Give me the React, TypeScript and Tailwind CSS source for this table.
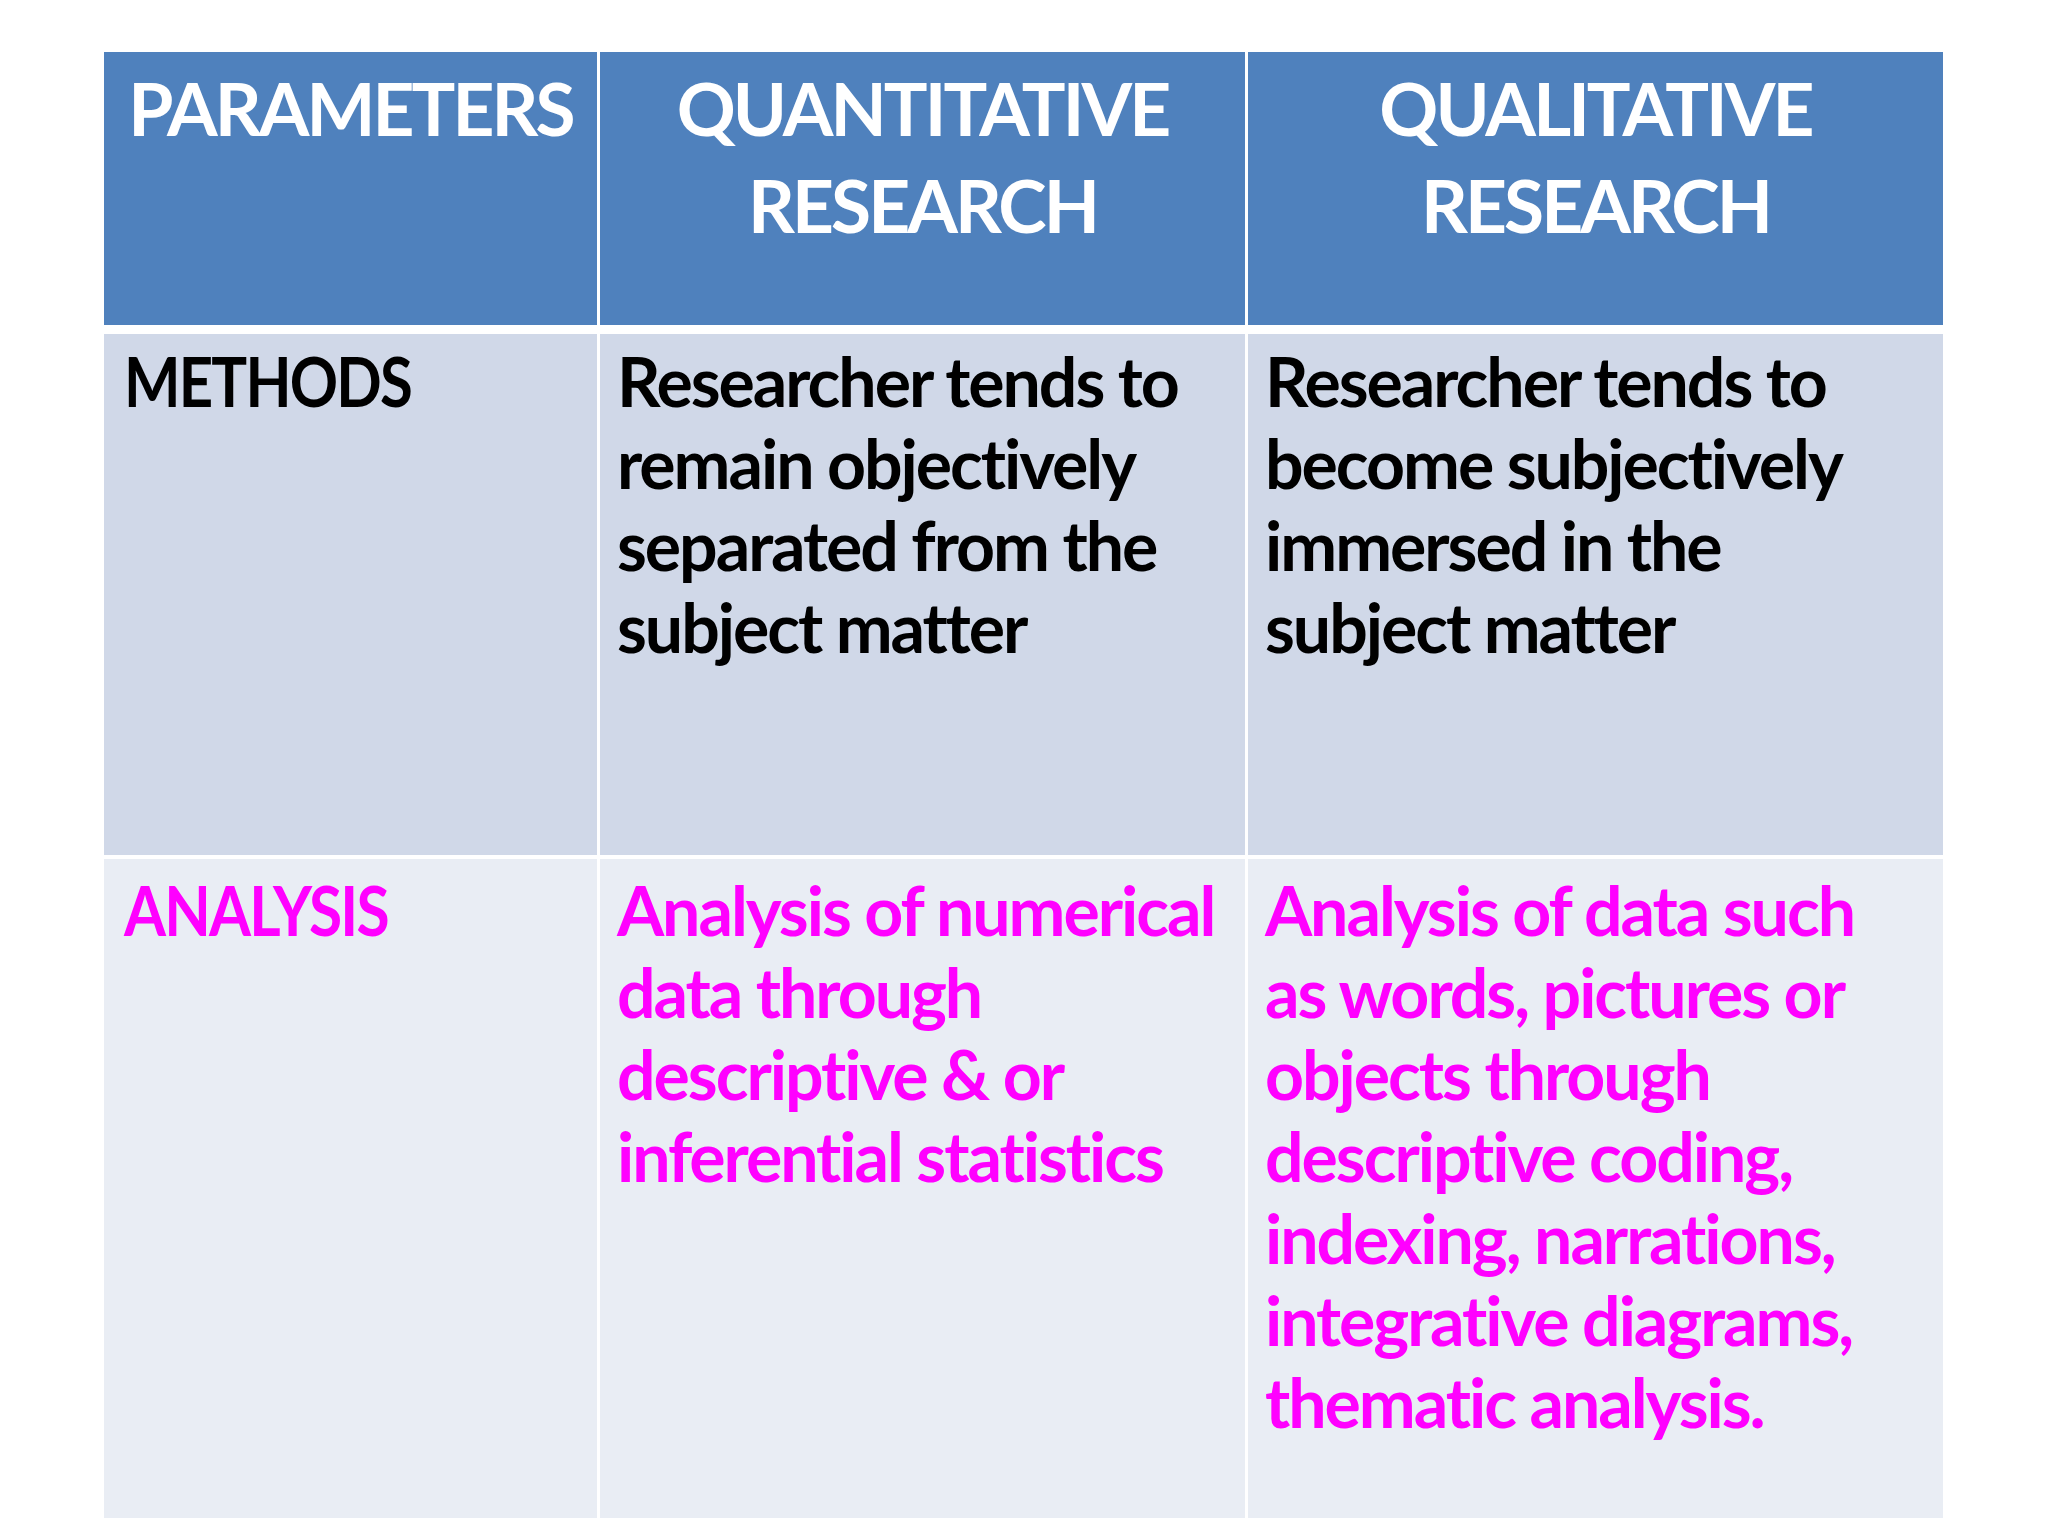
import React from 'react';

const font = { fontFamily: 'Lato, "Open Sans", sans-serif' };

function Lines({ lines }: { lines: string[] }) {
  return (
    <>
      {lines.map((l, i) => (
        <div key={i} className="whitespace-nowrap">
          {l}
        </div>
      ))}
    </>
  );
}

export default function App() {
  return (
    <div className="w-[2048px] h-[1536px] bg-white overflow-hidden" style={font}>
      <div className="ml-[104px] mt-[52px] w-[1839px] flex flex-col">
        {/* Header */}
        <div className="grid grid-cols-[493px_645px_695px] gap-x-[3px] h-[273px] font-bold text-white text-[73px] leading-[97px] tracking-[-0.04em] text-center">
          <div className="bg-[#4f81bd] pt-[8px]">
            <Lines lines={['PARAMETERS']} />
          </div>
          <div className="bg-[#4f81bd] pt-[8px]">
            <Lines lines={['QUANTITATIVE', 'RESEARCH']} />
          </div>
          <div className="bg-[#4f81bd] pt-[8px]">
            <Lines lines={['QUALITATIVE', 'RESEARCH']} />
          </div>
        </div>

        {/* Methods */}
        <div className="mt-[9px] grid grid-cols-[493px_645px_695px] gap-x-[3px] h-[521px] font-bold text-black text-[68px] leading-[82px] tracking-[-0.03em]">
          <div className="bg-[#d0d8e8] pl-[20px] pt-[6px]">
            <div className="whitespace-nowrap origin-left scale-x-[0.88]">METHODS</div>
          </div>
          <div className="bg-[#d0d8e8] pl-[17px] pt-[6px]">
            <Lines
              lines={[
                'Researcher tends to',
                'remain objectively',
                'separated from the',
                'subject matter',
              ]}
            />
          </div>
          <div className="bg-[#d0d8e8] pl-[17px] pt-[6px]">
            <Lines
              lines={[
                'Researcher tends to',
                'become subjectively',
                'immersed in the',
                'subject matter',
              ]}
            />
          </div>
        </div>

        {/* Analysis */}
        <div className="mt-[4px] grid grid-cols-[493px_645px_695px] gap-x-[3px] h-[659px] font-bold text-[#ff00ff] text-[68px] leading-[82px] tracking-[-0.03em]">
          <div className="bg-[#e9edf4] pl-[20px] pt-[10px]">
            <div className="whitespace-nowrap origin-left scale-x-[0.89]">ANALYSIS</div>
          </div>
          <div className="bg-[#e9edf4] pl-[17px] pt-[10px]">
            <Lines
              lines={[
                'Analysis of numerical',
                'data through',
                'descriptive & or',
                'inferential statistics',
              ]}
            />
          </div>
          <div className="bg-[#e9edf4] pl-[17px] pt-[10px]">
            <Lines
              lines={[
                'Analysis of data such',
                'as words, pictures or',
                'objects through',
                'descriptive coding,',
                'indexing, narrations,',
                'integrative diagrams,',
                'thematic analysis.',
              ]}
            />
          </div>
        </div>
      </div>
    </div>
  );
}
